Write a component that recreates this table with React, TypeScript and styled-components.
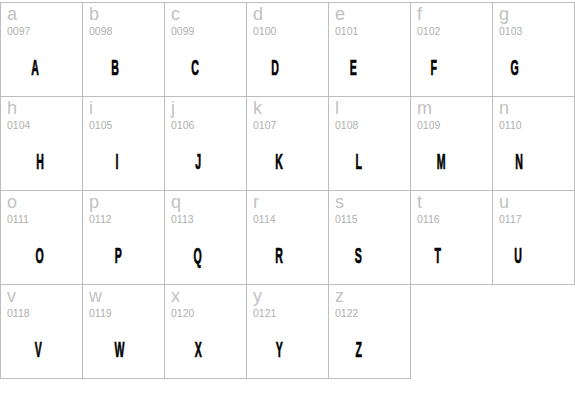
import styled, { createGlobalStyle } from 'styled-components';

// center of the big glyph, measured from the cell's left border line
const chars: { lower: string; upper: string; center: number }[] = [
  { lower: 'a', upper: 'A', center: 35 },
  { lower: 'b', upper: 'B', center: 33 },
  { lower: 'c', upper: 'C', center: 31 },
  { lower: 'd', upper: 'D', center: 29 },
  { lower: 'e', upper: 'E', center: 25.5 },
  { lower: 'f', upper: 'F', center: 24 },
  { lower: 'g', upper: 'G', center: 22.5 },
  { lower: 'h', upper: 'H', center: 39.5 },
  { lower: 'i', upper: 'I', center: 35 },
  { lower: 'j', upper: 'J', center: 34 },
  { lower: 'k', upper: 'K', center: 33 },
  { lower: 'l', upper: 'L', center: 31 },
  { lower: 'm', upper: 'M', center: 31 },
  { lower: 'n', upper: 'N', center: 27 },
  { lower: 'o', upper: 'O', center: 39.5 },
  { lower: 'p', upper: 'P', center: 36 },
  { lower: 'q', upper: 'Q', center: 34 },
  { lower: 'r', upper: 'R', center: 33 },
  { lower: 's', upper: 'S', center: 30 },
  { lower: 't', upper: 'T', center: 28 },
  { lower: 'u', upper: 'U', center: 26 },
  { lower: 'v', upper: 'V', center: 38 },
  { lower: 'w', upper: 'W', center: 37.5 },
  { lower: 'x', upper: 'X', center: 34 },
  { lower: 'y', upper: 'Y', center: 33 },
  { lower: 'z', upper: 'Z', center: 31 },
];

const pad = (n: number) => String(n).padStart(4, '0');

export default function App() {
  return (
    <>
      <GlobalStyle />
      <Grid>
        {chars.map(c => (
          <Cell key={c.lower}>
            <Lower>{c.lower}</Lower>
            <Code>{pad(c.lower.charCodeAt(0))}</Code>
            <GlyphBox $center={c.center}>
              <Glyph>{c.upper}</Glyph>
            </GlyphBox>
          </Cell>
        ))}
      </Grid>
    </>
  );
}

const GlobalStyle = createGlobalStyle`
  html, body {
    margin: 0;
    padding: 0;
    background: #ffffff;
    font-family: 'Liberation Sans', Arial, sans-serif;
  }
`;

const Grid = styled.div`
  display: grid;
  grid-template-columns: repeat(7, 82px);
  grid-auto-rows: 94px;
  margin-top: 2px;
  width: 574px;
  border-top: 1px solid #bdbdbd;
  border-left: 1px solid #bdbdbd;
`;

const Cell = styled.div`
  box-sizing: border-box;
  border-right: 1px solid #bdbdbd;
  border-bottom: 1px solid #bdbdbd;
  padding: 1px 0 0 6px;
  overflow: hidden;
`;

const Lower = styled.div`
  font-size: 18px;
  line-height: 20px;
  color: #c2c2c2;
`;

const Code = styled.div`
  font-size: 10.5px;
  line-height: 14px;
  color: #b0b0b0;
`;

const GlyphBox = styled.div<{ $center: number }>`
  margin: 19px 0 0 -6px;
  width: ${p => (p.$center - 1) * 2}px;
  text-align: center;
  line-height: 22px;
`;

const Glyph = styled.span`
  display: inline-block;
  font-size: 22px;
  font-weight: 700;
  color: #000000;
  -webkit-text-stroke: 0.7px #000000;
  transform: scaleX(0.48);
  transform-origin: center;
`;
